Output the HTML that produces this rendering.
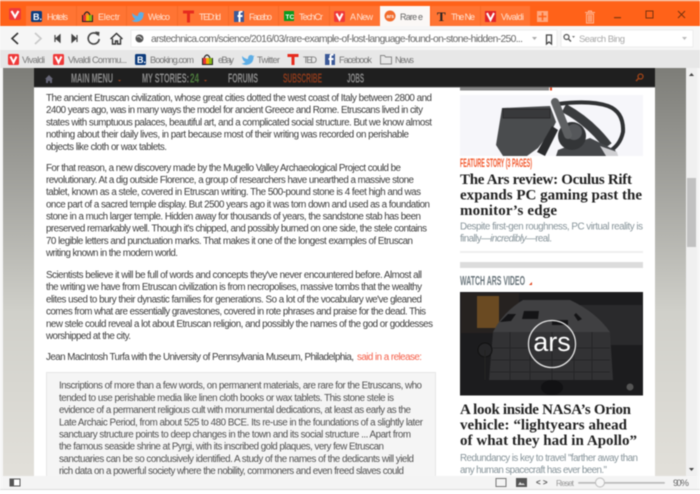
<!DOCTYPE html>
<html><head><meta charset="utf-8"><style>
html,body{margin:0;padding:0;width:700px;height:494px;overflow:hidden;background:#fff}
svg{display:block;position:absolute;left:0;top:0;filter:blur(.4px)}
text{font-family:"Liberation Sans",sans-serif;white-space:pre}
.b text{font-size:9.8px;fill:#3c3c3c}
.q text{font-size:9.8px;fill:#505050}
.h text{font-family:"Liberation Serif",serif;font-weight:bold;font-size:15px;fill:#222}
.d text{font-size:9.8px;fill:#87949a}
.t text{font-size:9px;fill:#ffe2d2}
.m text{font-size:9.200px;fill:#777;}
.n text{font-size:13px;font-weight:bold;fill:#8a8a8a}
</style></head><body>
<svg width="700" height="494" viewBox="0 0 700 494" xmlns="http://www.w3.org/2000/svg">
<defs>
<linearGradient id="bg" x1="0" y1="0" x2="0" y2="1"><stop offset="0" stop-color="#7d7d78"/><stop offset=".3" stop-color="#a5a5a0"/><stop offset=".6" stop-color="#d0d0ca"/><stop offset="1" stop-color="#e2e0da"/></linearGradient>
</defs>
<rect width="700" height="494" fill="#fff"/>
<!-- page bg -->
<rect x="3" y="68" width="683" height="408" fill="url(#bg)"/>
<rect x="34" y="68" width="621" height="408" fill="#fff"/>
<!-- tab strip -->
<rect width="700" height="26" fill="#ff6219"/>
<rect width="700" height="1.500" fill="#f7a47a"/>
<rect x="26" y="6" width="354" height="20" fill="#ff7433"/>
<rect x="431" y="6" width="99" height="20" fill="#ff7433"/>
<rect x="76" y="6" width="1" height="20" fill="#f56a28"/><rect x="126" y="6" width="1" height="20" fill="#f56a28"/><rect x="177" y="6" width="1" height="20" fill="#f56a28"/><rect x="228" y="6" width="1" height="20" fill="#f56a28"/><rect x="278" y="6" width="1" height="20" fill="#f56a28"/><rect x="329" y="6" width="1" height="20" fill="#f56a28"/><rect x="480" y="6" width="1" height="20" fill="#f56a28"/>
<rect x="380" y="6" width="50" height="20" fill="#fbf8f6"/>
<!-- vivaldi logo -->
<rect x="9" y="8" width="12" height="12" rx="2" fill="#ef3939"/><path d="M11.500 11 L15 17 L18.500 11" fill="none" stroke="#fff" stroke-width="2.200"/>
<!-- tab icons -->
<rect x="31" y="11" width="11" height="11" rx="1.500" fill="#0c3b7c"/><text x="33" y="20" style="font-size:9px;font-weight:bold;fill:#fff">B.</text>
<g><rect x="82" y="15" width="11" height="7" fill="#222"/><rect x="83" y="15" width="3" height="6" fill="#e53238"/><rect x="86" y="15" width="3" height="6" fill="#f5af02"/><rect x="89" y="15" width="3" height="6" fill="#86b817"/><path d="M84 15 q3-6 6 0" fill="none" stroke="#222" stroke-width="1.200"/></g>
<path d="M132 13 q3 3 6 3 q0-4 3-4 q1.500 0 2 1 l1.500-.5 -1 1.500 v1 q-.5 6-7 7 q-3 0-5-1.500 q2.500 0 4-1.500 q-3-1-3.500-5.500z" fill="#5eaee6"/>
<path d="M183 10.500h11v3h-4v9h-3v-9h-4z" fill="#e62b1e"/>
<rect x="234" y="11" width="10" height="11" fill="#3b5998"/><path d="M240.500 22v-5h2v-2h-2v-1.500q0-1 1-1h1v-1.500h-2q-2 0-2 2v2h-1v2h1v5z" fill="#fff"/>
<rect x="284" y="11" width="10" height="10" fill="#0a9a1e"/><text x="285.500" y="19" style="font-size:6.500px;font-weight:bold;fill:#fff">TC</text>
<rect x="334" y="11" width="11" height="11" rx="1.500" fill="#ef3939"/><path d="M336.500 13.500 L339.500 19.500 L342.500 13.500" fill="none" stroke="#fff" stroke-width="2"/>
<circle cx="390" cy="16" r="5.500" fill="#f26a2a"/><text x="386.500" y="18" style="font-size:5px;fill:#fff;font-weight:bold">ars</text>
<text x="437" y="21" style="font-family:'Liberation Serif',serif;font-size:13px;font-weight:bold;fill:#222">T</text>
<rect x="485" y="11" width="11" height="11" fill="#e0242a"/><path d="M487 13 L490.500 20 L494 13" fill="none" stroke="#fff" stroke-width="2"/>
<g class="t">
<text x="47" y="20" textLength="21">Hotels</text><text x="98" y="20" textLength="22">Electr</text><text x="148" y="20" textLength="22">Welco</text><text x="199" y="20" textLength="22">TED: Id</text><text x="249" y="20" textLength="23">Facebo</text><text x="299" y="20" textLength="24">TechCr</text><text x="350" y="20" textLength="23">A New</text><text x="451" y="20" textLength="24">The Ne</text><text x="501" y="20" textLength="23">Vivaldi</text>
</g>
<text x="400" y="20" textLength="23" style="font-size:9px;fill:#666">Rare e</text>
<!-- add tab -->
<rect x="537" y="11" width="11" height="11" fill="#ffa77e"/><path d="M542.500 12.500v8M538.500 16.500h8" stroke="#ff6219" stroke-width="1.500"/>
<!-- trash -->
<path d="M586.500 14h7v9h-7zM585 12.500h10M588.500 12v-1h3v1M588.500 15v7M590 15v7M591.500 15v7" fill="none" stroke="#ffb592" stroke-width="1"/>
<!-- window -->
<rect x="614" y="17" width="7" height="1.300" fill="#8a3a10"/>
<rect x="646" y="11" width="7" height="7" fill="none" stroke="#7a3410" stroke-width="1"/>
<path d="M678 11l7 7M685 11l-7 7" stroke="#7a3410" stroke-width="1"/>
<!-- address bar -->
<rect y="26" width="700" height="24" fill="#f6f6f6"/>
<path d="M18 33l-6 5.500 6 5.500" fill="none" stroke="#333" stroke-width="1.600"/>
<path d="M35 33l6 5.500-6 5.500" fill="none" stroke="#c8c8c8" stroke-width="1.600"/>
<path d="M55 35v7M60 35l-4 3.500 4 3.500z" stroke="#444" stroke-width="1.200" fill="#444"/>
<path d="M77 35v7M72 35l4 3.500-4 3.500z" stroke="#444" stroke-width="1.200" fill="#444"/>
<path d="M98 35a5.500 5.500 0 1 0 1.200 4" fill="none" stroke="#444" stroke-width="1.600"/><path d="M95 31.500l4.500 .5-.5 4.500z" fill="#444"/>
<path d="M110.500 39l6-5.500 6 5.500M112.500 38.500v5.500h3v-3h2v3h3v-5.500" fill="none" stroke="#333" stroke-width="1.400"/>
<rect x="131" y="30" width="426" height="17" fill="#fff" stroke="#ececec"/>
<circle cx="139.500" cy="38.500" r="4" fill="#555"/><path d="M137 37q2-1 3 0t2 2" stroke="#fff" stroke-width=".8" fill="none"/>
<text x="151" y="42" textLength="372" style="font-size:10.300px;fill:#666">arstechnica.com/science/2016/03/rare-example-of-lost-language-found-on-stone-hidden-250...</text>
<path d="M532 37h5l-2.500 3z" fill="#aaa"/>
<path d="M546.500 35h5v9l-2.500-2-2.500 2z" fill="none" stroke="#444" stroke-width="1.300"/>
<rect x="561" y="30" width="132" height="17" fill="#fff" stroke="#ececec"/>
<circle cx="566.500" cy="37" r="2.500" fill="none" stroke="#555" stroke-width="1.200"/><path d="M568.500 39l2.500 2.500" stroke="#555" stroke-width="1.300"/><path d="M572 36h3l-1.500 2z" fill="#777"/>
<text x="579" y="42" textLength="46" style="font-size:9.500px;fill:#aaa">Search Bing</text>
<path d="M682 37h5l-2.500 3z" fill="#bbb"/>
<!-- bookmarks -->
<rect y="50" width="700" height="18" fill="#e7e7e7"/>
<g class="m">
<rect x="8" y="54" width="11" height="11" rx="1.500" fill="#ef3939"/><path d="M10.500 56.500l3 6 3-6" fill="none" stroke="#fff" stroke-width="2"/>
<text x="22" y="63" textLength="23">Vivaldi</text>
<rect x="53" y="54" width="11" height="11" rx="1.500" fill="#ef3939"/><path d="M55.500 56.500l3 6 3-6" fill="none" stroke="#fff" stroke-width="2"/>
<text x="68" y="63" textLength="59">Vivaldi Commu...</text>
<rect x="135" y="54" width="11" height="11" rx="1.500" fill="#0c3b7c"/><text x="137" y="63" style="font-size:9px;font-weight:bold;fill:#fff">B.</text>
<text x="150" y="63" textLength="44">Booking.com</text>
<rect x="202" y="58" width="11" height="7" fill="#222"/><rect x="203" y="58" width="3" height="6" fill="#e53238"/><rect x="206" y="58" width="3" height="6" fill="#f5af02"/><rect x="209" y="58" width="3" height="6" fill="#86b817"/><path d="M204 58q3-6 6 0" fill="none" stroke="#222" stroke-width="1.200"/>
<text x="218" y="63" textLength="16">eBay</text>
<path d="M242 56q3 3 6 3q0-4 3-4q1.500 0 2 1l1.500-.5-1 1.500v1q-.5 6-7 7q-3 0-5-1.500q2.500 0 4-1.500q-3-1-3.500-5.500z" fill="#5eaee6"/>
<text x="257" y="63" textLength="23">Twitter</text>
<path d="M287.500 54h11v3h-4v8h-3v-8h-4z" fill="#e62b1e"/>
<text x="303" y="63" textLength="14">TED</text>
<rect x="325" y="54" width="10" height="11" fill="#3b5998"/><path d="M331.500 65v-5h2v-2h-2v-1.500q0-1 1-1h1v-1.500h-2q-2 0-2 2v2h-1v2h1v5z" fill="#fff"/>
<text x="339" y="63" textLength="33">Facebook</text>
<path d="M380.500 55.500h4l1 1.500h6v7h-11z" fill="none" stroke="#888" stroke-width="1"/>
<text x="395" y="63" textLength="19">News</text>
</g>
<!-- nav -->
<rect x="34" y="68" width="621" height="19" fill="#1f1f1f"/>
<rect x="34" y="86.500" width="621" height="1" fill="#555"/>
<path d="M45 79l4-4 4 4h-1v4h-2v-2h-2v2h-2v-4z" fill="#667"/>
<g class="n">
<text x="71" y="82.500" textLength="42" lengthAdjust="spacingAndGlyphs">MAIN MENU</text>
<text x="142" y="82.500" textLength="47" lengthAdjust="spacingAndGlyphs">MY STORIES:</text>
<text x="190" y="82.500" textLength="9" lengthAdjust="spacingAndGlyphs" style="fill:#4c7a3c">24</text>
<text x="228" y="82.500" textLength="30" lengthAdjust="spacingAndGlyphs">FORUMS</text>
<text x="283" y="82.500" textLength="39" lengthAdjust="spacingAndGlyphs" style="fill:#8a3a1c">SUBSCRIBE</text>
<text x="347" y="82.500" textLength="17" lengthAdjust="spacingAndGlyphs">JOBS</text>
</g>
<path d="M118 80h3l-1.500 1.500zM204 80h3l-1.500 1.500z" fill="#b04a20"/>
<circle cx="640.500" cy="76.500" r="2.500" fill="none" stroke="#a04418" stroke-width="1.300"/><path d="M638.500 78.500l-2.500 2.500" stroke="#a04418" stroke-width="1.500"/>
<!-- article -->
<g class="b">
<text x="46" y="101" textLength="386">The ancient Etruscan civilization, whose great cities dotted the west coast of Italy between 2800 and</text>
<text x="46" y="113.200" textLength="377">2400 years ago, was in many ways the model for ancient Greece and Rome. Etruscans lived in city</text>
<text x="46" y="125.400" textLength="386">states with sumptuous palaces, beautiful art, and a complicated social structure. But we know almost</text>
<text x="46" y="137.600" textLength="363">nothing about their daily lives, in part because most of their writing was recorded on perishable</text>
<text x="46" y="149.800" textLength="121">objects like cloth or wax tablets.</text>
<text x="46" y="170.800" textLength="355">For that reason, a new discovery made by the Mugello Valley Archaeological Project could be</text>
<text x="46" y="183" textLength="368">revolutionary. At a dig outside Florence, a group of researchers have unearthed a massive stone</text>
<text x="46" y="195.200" textLength="375">tablet, known as a stele, covered in Etruscan writing. The 500-pound stone is 4 feet high and was</text>
<text x="46" y="207.400" textLength="384">once part of a sacred temple display. But 2500 years ago it was torn down and used as a foundation</text>
<text x="46" y="219.500" textLength="375">stone in a much larger temple. Hidden away for thousands of years, the sandstone stab has been</text>
<text x="46" y="231.700" textLength="381">preserved remarkably well. Though it's chipped, and possibly burned on one side, the stele contains</text>
<text x="46" y="243.900" textLength="367">70 legible letters and punctuation marks. That makes it one of the longest examples of Etruscan</text>
<text x="46" y="256.100" textLength="132">writing known in the modern world.</text>
<text x="46" y="278" textLength="376">Scientists believe it will be full of words and concepts they've never encountered before. Almost all</text>
<text x="46" y="290.200" textLength="376">the writing we have from Etruscan civilization is from necropolises, massive tombs that the wealthy</text>
<text x="46" y="302.400" textLength="376">elites used to bury their dynastic families for generations. So a lot of the vocabulary we've gleaned</text>
<text x="46" y="314.600" textLength="380">comes from what are essentially gravestones, covered in rote phrases and praise for the dead. This</text>
<text x="46" y="326.800" textLength="387">new stele could reveal a lot about Etruscan religion, and possibly the names of the god or goddesses</text>
<text x="46" y="339" textLength="85">worshipped at the city.</text>
<text x="46" y="360" textLength="308">Jean MacIntosh Turfa with the University of Pennsylvania Museum, Philadelphia,</text>
<text x="357" y="360" textLength="65" style="fill:#f5604a">said in a release:</text>
</g>
<rect x="46.500" y="372.500" width="389" height="110" fill="#f5f5f5" stroke="#e6e6e6"/>
<g class="q">
<text x="59" y="388.700" textLength="363">Inscriptions of more than a few words, on permanent materials, are rare for the Etruscans, who</text>
<text x="59" y="400.900" textLength="335">tended to use perishable media like linen cloth books or wax tablets. This stone stele is</text>
<text x="59" y="413.100" textLength="352">evidence of a permanent religious cult with monumental dedications, at least as early as the</text>
<text x="59" y="425.300" textLength="364">Late Archaic Period, from about 525 to 480 BCE. Its re-use in the foundations of a slightly later</text>
<text x="59" y="437.500" textLength="352">sanctuary structure points to deep changes in the town and its social structure ... Apart from</text>
<text x="59" y="449.700" textLength="325">the famous seaside shrine at Pyrgi, with its inscribed gold plaques, very few Etruscan</text>
<text x="59" y="461.900" textLength="355">sanctuaries can be so conclusively identified. A study of the names of the dedicants will yield</text>
<text x="59" y="474" textLength="345">rich data on a powerful society where the nobility, commoners and even freed slaves could</text>
</g>
<!-- sidebar -->
<rect x="460" y="87.500" width="89" height="3" fill="#888"/><rect x="550" y="87.500" width="2" height="3" fill="#e0431c"/>
<rect x="460" y="95" width="183" height="61" fill="#f6f6fa"/>
<!-- headset -->
<path d="M496 145 L502 108 L550 106 L556 122 L552 130 L538 148 L527 156 L503 156 Z" fill="#4a4c4e"/>
<rect x="503" y="109" width="47" height="9" fill="#38393b" stroke="#2b2b2d"/>
<path d="M558 104 Q590 100 608 106 Q624 112 623 132 Q620 146 608 152" fill="none" stroke="#303234" stroke-width="4"/>
<path d="M564 108 Q590 122 608 146" fill="none" stroke="#3a3c3e" stroke-width="9"/>
<path d="M537 152 L552 126 L558 130 L545 156Z" fill="#2a2b2d"/>
<path d="M558 150 L590 138 L615 150 L618 156 L556 156Z" fill="#45474a"/>
<path d="M600 146 L617 152 L618 156 L606 156Z" fill="#cfcfd2"/>
<circle cx="572" cy="136" r="14" fill="#333537"/><circle cx="574" cy="132" r="8" fill="#55575a"/>
<path d="M555 102 L568 135" stroke="#5e6062" stroke-width="8" stroke-linecap="round"/>
<text x="460" y="167" textLength="72" lengthAdjust="spacingAndGlyphs" style="font-size:12px;font-weight:bold;fill:#f2562a">FEATURE STORY (3 PAGES)</text>
<g class="h">
<text x="460" y="184" textLength="172">The Ars review: Oculus Rift</text>
<text x="460" y="199.500" textLength="182">expands PC gaming past the</text>
<text x="460" y="215" textLength="97">monitor’s edge</text>
<text x="460" y="414" textLength="171">A look inside NASA’s Orion</text>
<text x="460" y="429.500" textLength="167">vehicle: “lightyears ahead</text>
<text x="460" y="445" textLength="177">of what they had in Apollo”</text>
</g>
<g class="d">
<text x="460" y="229.500" textLength="183">Despite first-gen roughness, PC virtual reality is</text>
<text x="460" y="241.500" textLength="92">finally—<tspan font-style="italic">incredibly</tspan>—real.</text>
<text x="460" y="461" textLength="178">Redundancy is key to travel "farther away than</text>
<text x="460" y="473" textLength="147">any human spacecraft has ever been."</text>
</g>
<rect x="460" y="251" width="183" height="2" fill="#efefef"/>
<rect x="460" y="262" width="183" height="6" fill="#dcdcdc"/>
<text x="460" y="285" textLength="65" lengthAdjust="spacingAndGlyphs" style="font-size:13px;font-weight:bold;fill:#6a767c">WATCH ARS VIDEO</text>
<path d="M529 285l3-3v3z" fill="#e0431c"/>
<!-- video -->
<rect x="460" y="292" width="183" height="103.500" fill="#1c1c1e"/>
<rect x="461" y="293" width="58" height="40" fill="#262220"/>
<rect x="477" y="296" width="22" height="32" fill="#6a4a22"/>
<rect x="578" y="305" width="64" height="40" fill="#2a2a2c"/>
<path d="M493 332 Q503 312 523 300 L570 300 Q596 312 610 332z" fill="#404042"/>
<path d="M493 332h117l3 48h-124z" fill="#323234"/>
<path d="M500 322l8-8 8 0-5 7zM522 319h16l1-8h-15zM552 320h16v5h-16zM576 313l6 6 -4 2-4-6z" fill="#141416"/>
<path d="M490 348h120M490 360h120M490 372h120M510 332v48M530 332v48M552 332v48M574 332v48M592 332v48" stroke="#262628" stroke-width="1"/>
<rect x="541" y="380" width="22" height="15" rx="10" fill="#121214"/>
<circle cx="485" cy="350" r="7" fill="#262628" stroke="#111"/><path d="M485 350v30" stroke="#222" stroke-width="1.500"/>
<circle cx="552" cy="344" r="23.500" fill="none" stroke="#e6e6e6" stroke-width="1.300"/>
<text x="552" y="351" text-anchor="middle" style="font-size:27px;fill:#fff">ars</text>
<circle cx="630" cy="387" r="3.500" fill="#555"/>
<!-- scrollbar -->
<rect x="686" y="68" width="11" height="408" fill="#f0f0f0"/>
<rect x="687" y="178" width="9" height="69" fill="#c1c1c1"/>
<path d="M689 76l2.500-3 2.500 3z" fill="#444"/><path d="M689 468l2.500 3 2.500-3z" fill="#444"/>
<!-- status -->
<rect x="0" y="476" width="700" height="13" fill="#f4f4f4"/>
<rect x="0" y="489" width="700" height="1" fill="#ddd"/>
<rect x="0" y="68" width="3" height="421" fill="#f6f6f6"/>
<rect x="697" y="68" width="3" height="421" fill="#f6f6f6"/>
<rect x="10" y="479" width="10" height="7" fill="#fff" stroke="#555"/><rect x="10" y="479" width="4" height="7" fill="#555"/>
<rect x="496" y="478.500" width="10" height="8" fill="none" stroke="#777"/>
<rect x="516" y="478" width="11" height="9" fill="#555"/><path d="M518 485l2-3 2 2 1-1 2 2z" fill="#ddd"/>
<text x="536" y="485" style="font-size:8px;font-weight:bold;fill:#555">&lt; &gt;</text>
<text x="556" y="486" textLength="18" style="font-size:8.500px;fill:#999">Reset</text>
<rect x="578" y="482" width="87" height="1.800" rx="1" fill="#bbb"/>
<circle cx="600" cy="482.500" r="4.500" fill="#f7f7f7" stroke="#bbb"/>
<text x="673" y="486" textLength="16" style="font-size:9.500px;fill:#666">90 %</text>
</svg>
</body></html>
